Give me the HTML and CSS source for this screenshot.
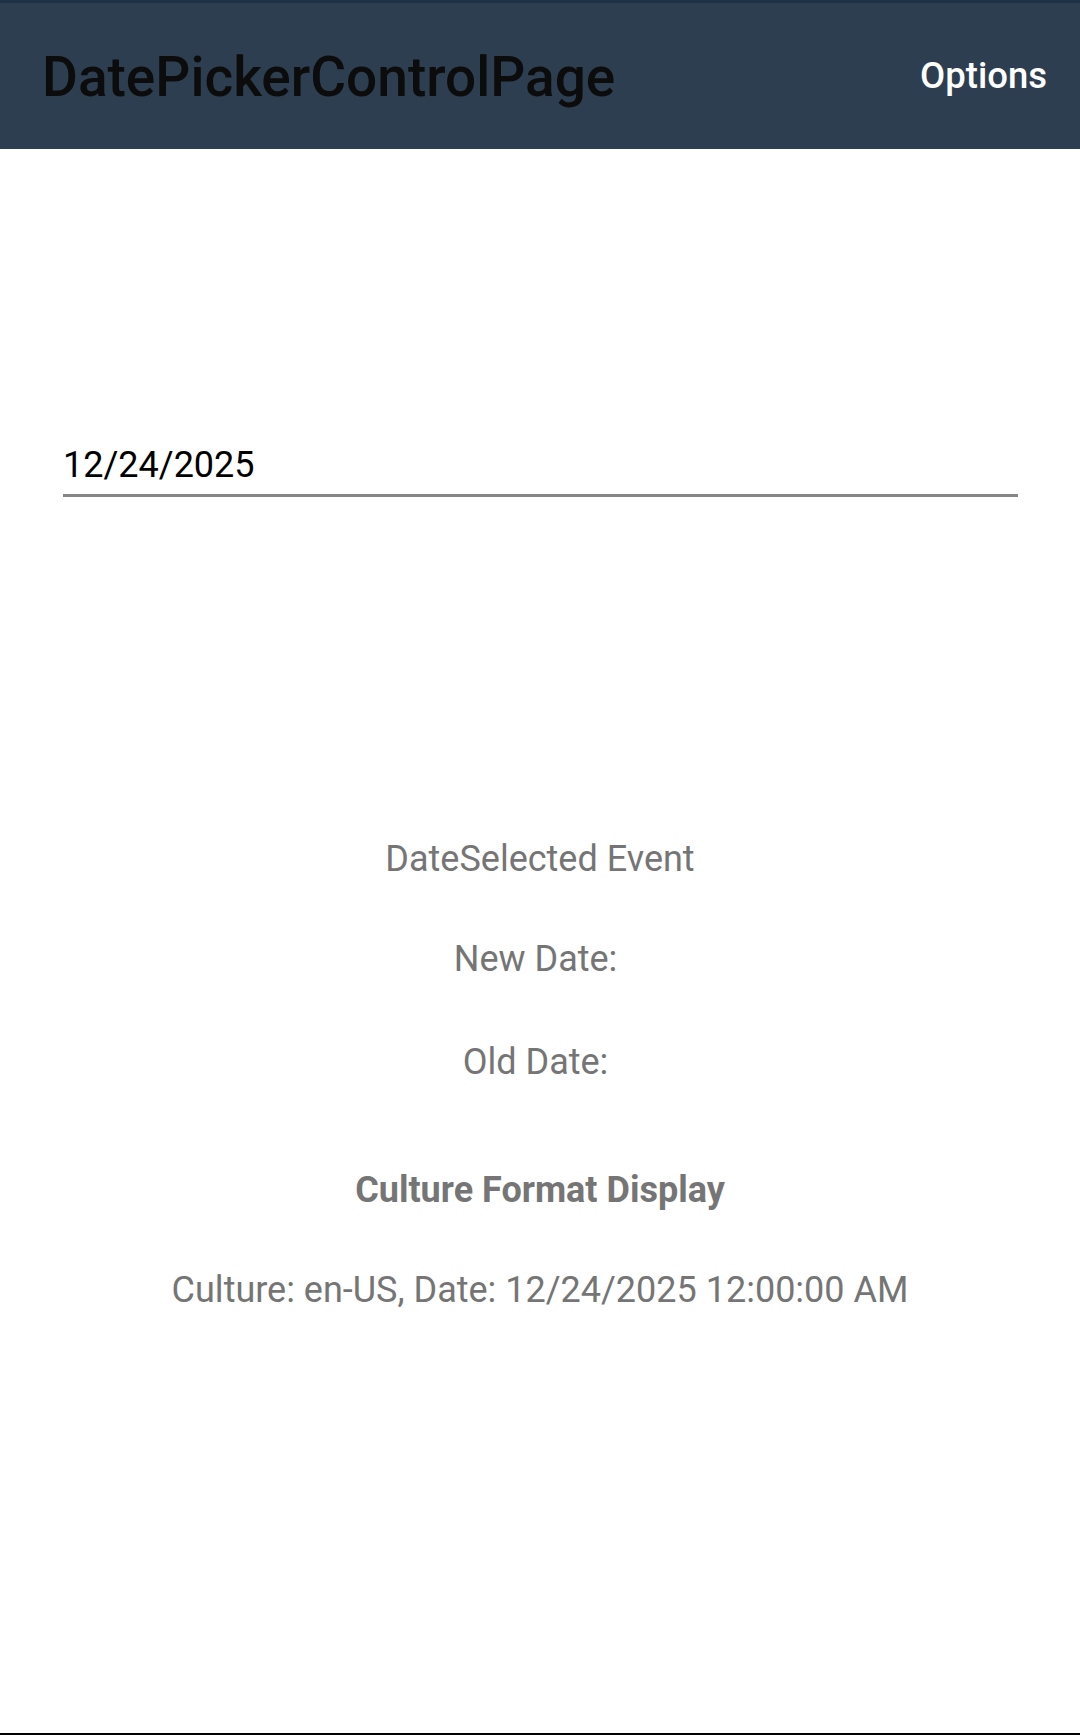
FILE: index.html
```html
<!DOCTYPE html>
<html lang="en">
<head>
<meta charset="utf-8">
<link rel="stylesheet" href="styles.css">
</head>
<body>
<header class="toolbar">
  <div class="title">DatePickerControlPage</div>
  <div class="action">Options</div>
</header>
<main class="content">
  <div class="entry">12/24/2025</div>
  <div class="label first">DateSelected Event</div>
  <div class="label">New Date:&nbsp;</div>
  <div class="label old">Old Date:&nbsp;</div>
  <div class="label heading">Culture Format Display</div>
  <div class="label last">Culture: en-US, Date: 12/24/2025 12:00:00 AM</div>
</main>
<div class="bottom-line"></div>
</body>
</html>
```
FILE: styles.css
```css
html, body {
  margin: 0;
  padding: 0;
  background: #ffffff;
}
body {
  width: 1080px;
  height: 1735px;
  display: flex;
  flex-direction: column;
  font-family: Roboto, "Liberation Sans", sans-serif;
  overflow: hidden;
}
.toolbar {
  height: 146px;
  border-top: 3px solid #1e3247;
  background: #2d3e50;
  display: flex;
  align-items: center;
  justify-content: space-between;
  padding: 0 33px 0 42px;
  flex: none;
}
.title {
  font-size: 55px;
  font-weight: 500;
  color: #0c0c0c;
  line-height: 64px;
  margin-top: 1px;
}
.action {
  font-size: 36.5px;
  font-weight: 500;
  color: #ffffff;
  line-height: 43px;
  margin-top: -1px;
}
.content {
  flex: 1;
  display: flex;
  flex-direction: column;
}
.entry {
  margin: 295px 62px 0 63px;
  padding: 0 0 8px 0;
  border-bottom: 3px solid #858585;
  font-size: 36px;
  line-height: 42px;
  color: #000000;
}
.label {
  text-align: center;
  font-size: 36px;
  line-height: 42px;
  color: #757575;
  margin-top: 58px;
}
.label.first {
  margin-top: 341px;
}
.label.old {
  margin-top: 61px;
}
.label.heading {
  font-weight: 700;
  margin-top: 86px;
}
.label.last {
  margin-top: 58px;
}
.bottom-line {
  height: 2px;
  background: #000000;
  flex: none;
}
```
